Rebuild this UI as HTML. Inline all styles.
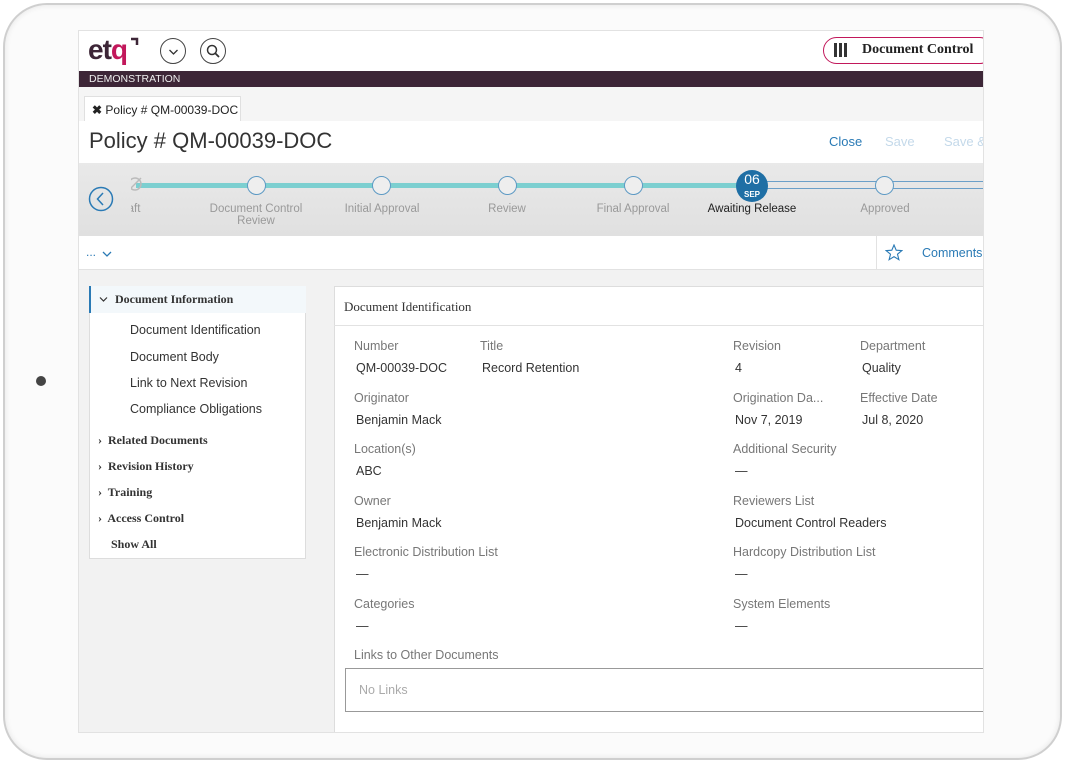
<!DOCTYPE html>
<html><head><meta charset="utf-8"><style>
*{margin:0;padding:0;box-sizing:border-box}
body{width:1065px;height:763px;background:#fff;position:relative;overflow:hidden;font-family:"Liberation Sans",sans-serif;color:#333}
.a{position:absolute;white-space:nowrap}
.tab{position:absolute;left:3px;top:3px;width:1059px;height:757px;border:2px solid #cfcfcf;border-radius:44px;background:#fbfbfb;box-shadow:inset 0 0 6px #e4e4e4}
.scr{position:absolute;left:78px;top:30px;width:906px;height:703px;background:#f2f2f2;overflow:hidden;border:1px solid #e2e2e2}
.lbl{font-size:12.5px;color:#777}
.val{font-size:12.5px;color:#333}
.serif{font-family:"Liberation Serif",serif;font-weight:bold}
.st{font-size:11.5px;color:#999;text-align:center;width:140px}
.c{position:absolute;width:19px;height:19px;border-radius:50%;border:1.5px solid #5e9ac4;background:#eee;top:145px}
</style></head><body>
<div class="tab"></div>
<div class="a" style="left:36px;top:376px;width:10px;height:10px;border-radius:50%;background:#444"></div>
<div class="scr">
 <div class="a" style="left:0;top:0;width:906px;height:40px;background:#fff"></div>
 <div class="a" style="left:9px;top:3px;font-size:28px;font-weight:bold;color:#3d2637;letter-spacing:-1px">et<span style="color:#c2185b">q</span></div>
 <svg class="a" style="left:51px;top:6px" width="10" height="10"><path d="M1 2H7V8" fill="none" stroke="#3d2637" stroke-width="2.5"/></svg>
 <div class="a" style="left:81px;top:7px;width:26px;height:26px;border:1px solid #444;border-radius:50%">
  <svg width="26" height="26" viewBox="0 0 26 26"><path d="M8.5 11L12.5 15L16.5 11" fill="none" stroke="#333" stroke-width="1.3"/></svg></div>
 <div class="a" style="left:121px;top:7px;width:26px;height:26px;border:1px solid #444;border-radius:50%">
  <svg width="26" height="26" viewBox="0 0 26 26"><circle cx="11" cy="11" r="4.5" fill="none" stroke="#333" stroke-width="1.5"/><path d="M14.5 14.5L18 18" stroke="#333" stroke-width="1.8"/></svg></div>
 <div class="a" style="left:744px;top:6px;width:170px;height:27px;border:1.5px solid #c2185b;border-radius:14px;background:#fff"></div>
 <div class="a" style="left:755px;top:12px;width:14px;height:14px;background:repeating-linear-gradient(90deg,#333 0 3px,#fff 3px 5px)"></div>
 <div class="a serif" style="left:783px;top:11px;font-size:14px;color:#222">Document Control</div>
 <div class="a" style="left:0;top:40px;width:906px;height:16px;background:#3d2637;color:#eee;font-size:10.5px;padding-left:10px;line-height:17px">DEMONSTRATION</div>
 <div class="a" style="left:0;top:56px;width:906px;height:34px;background:#f5f5f5"></div>
 <div class="a" style="left:5px;top:65px;width:157px;height:26px;background:#fff;border:1px solid #e0e0e0;border-bottom:none;font-size:12px;line-height:26px;padding-left:7px;color:#222"><b>&#x2716;</b> Policy # QM-00039-DOC</div>
 <div class="a" style="left:0;top:90px;width:906px;height:42px;background:#fff"></div>
 <div class="a" style="left:10px;top:97px;font-size:22px;color:#333">Policy # QM-00039-DOC</div>
 <div class="a" style="left:750px;top:103px;font-size:13px;color:#2a7ab5">Close</div>
 <div class="a" style="left:806px;top:103px;font-size:13px;color:#c4d9ea">Save</div>
 <div class="a" style="left:865px;top:103px;font-size:13px;color:#c4d9ea">Save &amp;</div>
 <div class="a" style="left:0;top:132px;width:906px;height:73px;background:linear-gradient(#e9e9e9,#e0e0e0)"></div>
 <svg class="a" style="left:9px;top:155px" width="26" height="26" viewBox="0 0 26 26"><circle cx="13" cy="13" r="11.5" fill="none" stroke="#2a7ab5" stroke-width="1.5"/><path d="M15 7L9.5 13L15 19" fill="none" stroke="#2a7ab5" stroke-width="1.5"/></svg>
 <div class="a" style="left:52px;top:132px;width:854px;height:73px;overflow:hidden">
  <div class="a" style="left:5px;top:20px;width:616px;height:5px;background:#7ccfd0"></div>
  <div class="a" style="left:621px;top:18px;width:233px;height:1px;background:#6b9fc8"></div>
  <div class="a" style="left:621px;top:25px;width:233px;height:1px;background:#6b9fc8"></div>
  <svg class="a" style="left:-6px;top:11px" width="20" height="20" viewBox="0 0 20 20"><circle cx="10" cy="10" r="6" fill="none" stroke="#bbb" stroke-width="1.5"/><path d="M4 16L16 4" stroke="#bbb" stroke-width="1.5"/></svg>
  <div class="a st" style="left:-73px;top:40px">Draft</div>
 </div>
 <div class="c" style="left:168px"></div><div class="a st" style="left:107px;top:172px">Document Control<br>Review</div>
 <div class="c" style="left:293px"></div><div class="a st" style="left:233px;top:172px">Initial Approval</div>
 <div class="c" style="left:419px"></div><div class="a st" style="left:358px;top:172px">Review</div>
 <div class="c" style="left:545px"></div><div class="a st" style="left:484px;top:172px">Final Approval</div>
 <div class="a" style="left:657px;top:139px;width:32px;height:32px;border-radius:50%;background:#1f6fa5;color:#fff;text-align:center;font-size:14px;line-height:13px;padding-top:3px">06<br><span style="font-size:8px;font-weight:bold">SEP</span></div>
 <div class="a st" style="left:603px;top:172px;color:#222">Awaiting Release</div>
 <div class="c" style="left:796px"></div><div class="a st" style="left:736px;top:172px">Approved</div>
 <div class="a" style="left:0;top:205px;width:906px;height:34px;background:#fff;border-bottom:1px solid #e2e2e2"></div>
 <div class="a" style="left:7px;top:214px;font-size:12px;color:#2a7ab5">...</div>
 <svg class="a" style="left:23px;top:219px" width="10" height="8"><path d="M1 2L5 6L9 2" fill="none" stroke="#2a7ab5" stroke-width="1.3"/></svg>
 <div class="a" style="left:797px;top:205px;width:1px;height:34px;background:#e2e2e2"></div>
 <svg class="a" style="left:806px;top:213px" width="18" height="17" viewBox="0 0 18 17"><path d="M9 1L11.2 6.2L16.8 6.6L12.5 10.2L13.9 15.7L9 12.7L4.1 15.7L5.5 10.2L1.2 6.6L6.8 6.2Z" fill="none" stroke="#2a7ab5" stroke-width="1.1"/></svg>
 <div class="a" style="left:843px;top:215px;font-size:12.5px;color:#2a7ab5">Comments</div>
 <div class="a" style="left:10px;top:255px;width:217px;height:273px;background:#fff;border:1px solid #ddd"></div>
 <div class="a" style="left:10px;top:255px;width:217px;height:27px;background:#f3f8fb;border-left:2px solid #2a7ab5"></div>
 <svg class="a" style="left:20px;top:265px" width="9" height="7"><path d="M1 1.5L4.5 5L8 1.5" fill="none" stroke="#333" stroke-width="1.2"/></svg>
 <div class="a serif" style="left:36px;top:261px;font-size:12px">Document Information</div>
 <div class="a" style="left:51px;top:292px;font-size:12.5px">Document Identification</div>
 <div class="a" style="left:51px;top:319px;font-size:12.5px">Document Body</div>
 <div class="a" style="left:51px;top:345px;font-size:12.5px">Link to Next Revision</div>
 <div class="a" style="left:51px;top:371px;font-size:12.5px">Compliance Obligations</div>
 <div class="a serif" style="left:19px;top:402px;font-size:12px">›&nbsp; Related Documents</div>
 <div class="a serif" style="left:19px;top:428px;font-size:12px">›&nbsp; Revision History</div>
 <div class="a serif" style="left:19px;top:454px;font-size:12px">›&nbsp; Training</div>
 <div class="a serif" style="left:19px;top:480px;font-size:12px">›&nbsp; Access Control</div>
 <div class="a serif" style="left:32px;top:506px;font-size:12px">Show All</div>
 <div class="a" style="left:255px;top:255px;width:660px;height:460px;background:#fff;border:1px solid #ddd"></div>
 <div class="a" style="left:255px;top:294px;width:660px;height:1px;background:#e2e2e2"></div>
 <div class="a" style="left:265px;top:268px;font-size:13px;font-family:'Liberation Serif',serif">Document Identification</div>
 <div class="a lbl" style="left:275px;top:308px">Number</div><div class="a val" style="left:277px;top:330px">QM-00039-DOC</div>
 <div class="a lbl" style="left:401px;top:308px">Title</div><div class="a val" style="left:403px;top:330px">Record Retention</div>
 <div class="a lbl" style="left:654px;top:308px">Revision</div><div class="a val" style="left:656px;top:330px">4</div>
 <div class="a lbl" style="left:781px;top:308px">Department</div><div class="a val" style="left:783px;top:330px">Quality</div>
 <div class="a lbl" style="left:275px;top:360px">Originator</div><div class="a val" style="left:277px;top:382px">Benjamin Mack</div>
 <div class="a lbl" style="left:654px;top:360px">Origination Da...</div><div class="a val" style="left:656px;top:382px">Nov 7, 2019</div>
 <div class="a lbl" style="left:781px;top:360px">Effective Date</div><div class="a val" style="left:783px;top:382px">Jul 8, 2020</div>
 <div class="a lbl" style="left:275px;top:411px">Location(s)</div><div class="a val" style="left:277px;top:433px">ABC</div>
 <div class="a lbl" style="left:654px;top:411px">Additional Security</div><div class="a val" style="left:656px;top:433px">—</div>
 <div class="a lbl" style="left:275px;top:463px">Owner</div><div class="a val" style="left:277px;top:485px">Benjamin Mack</div>
 <div class="a lbl" style="left:654px;top:463px">Reviewers List</div><div class="a val" style="left:656px;top:485px">Document Control Readers</div>
 <div class="a lbl" style="left:275px;top:514px">Electronic Distribution List</div><div class="a val" style="left:277px;top:536px">—</div>
 <div class="a lbl" style="left:654px;top:514px">Hardcopy Distribution List</div><div class="a val" style="left:656px;top:536px">—</div>
 <div class="a lbl" style="left:275px;top:566px">Categories</div><div class="a val" style="left:277px;top:588px">—</div>
 <div class="a lbl" style="left:654px;top:566px">System Elements</div><div class="a val" style="left:656px;top:588px">—</div>
 <div class="a lbl" style="left:275px;top:617px">Links to Other Documents</div>
 <div class="a" style="left:266px;top:637px;width:650px;height:44px;border:1px solid #999;font-size:12.5px;color:#aaa;padding:14px 0 0 13px">No Links</div>
</div>
</body></html>
